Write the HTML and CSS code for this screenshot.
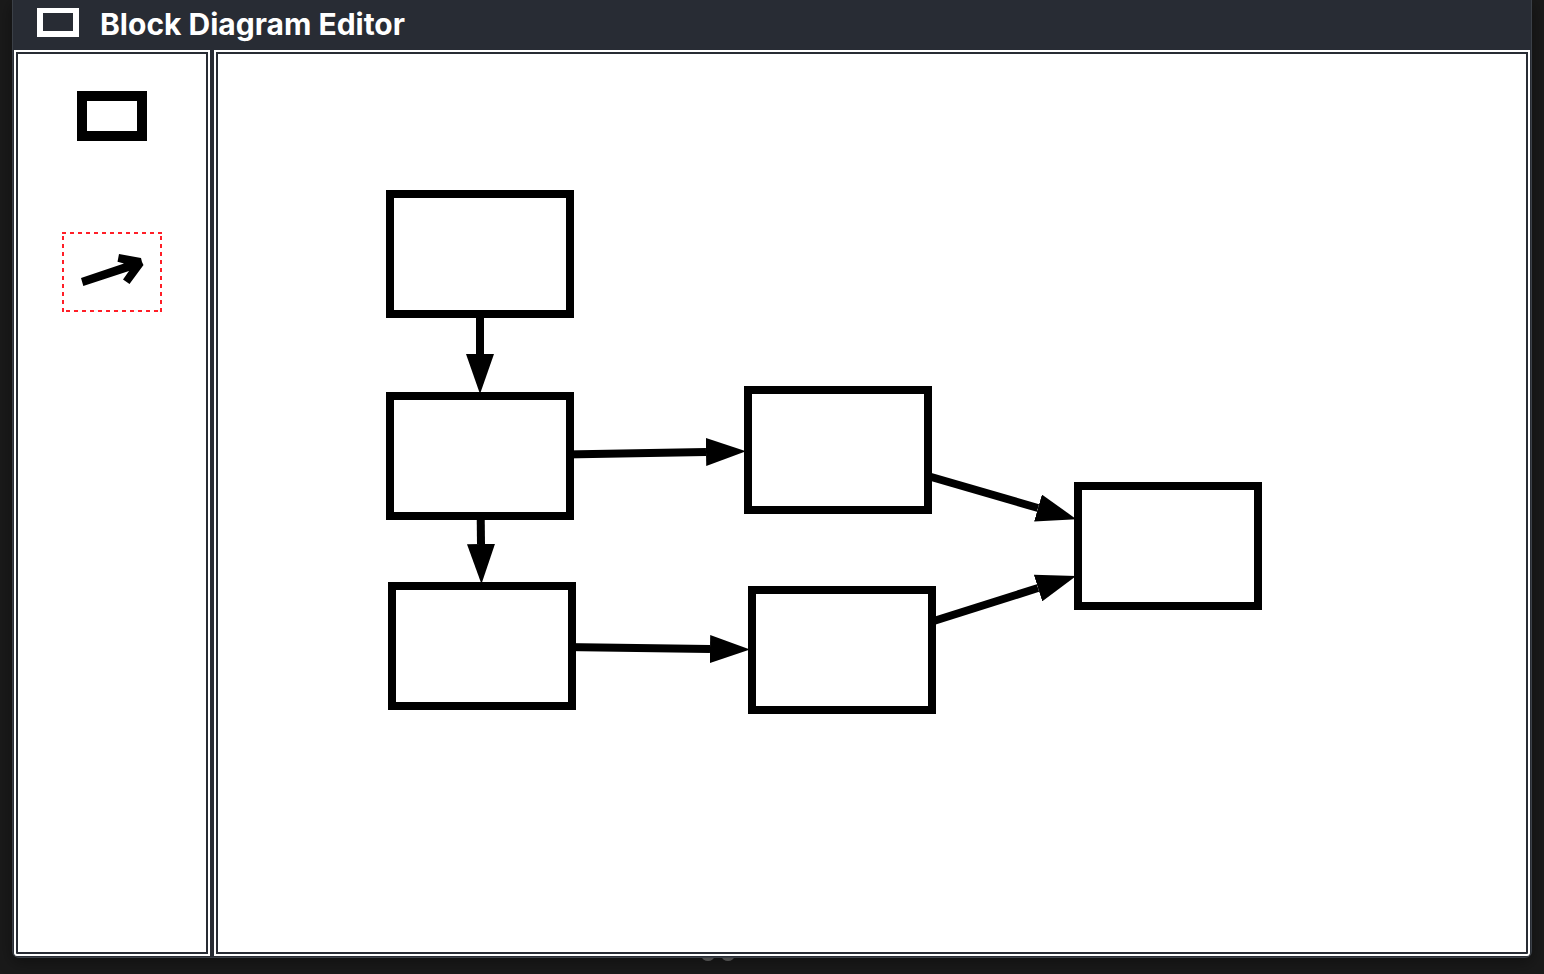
FILE: index.html
```html
<!DOCTYPE html>
<html lang="en">
<head>
<meta charset="utf-8">
<title>Block Diagram Editor</title>
<link rel="stylesheet" href="styles.css">
</head>
<body>
<div class="backdrop-dots" aria-hidden="true"><span class="dot"></span><span class="dot"></span></div>
<div class="window">
  <header class="titlebar">
    <span class="logo"></span>
    <h1 class="title">Block Diagram Editor</h1>
  </header>
  <main class="workspace">
    <nav class="panel toolbox" aria-label="Tools">
      <button class="tool" type="button" aria-label="Block">
        <svg width="100" height="80" viewBox="0 0 100 80"><rect x="20" y="20" width="60" height="40" fill="none" stroke="#000" stroke-width="10"/></svg>
      </button>
      <button class="tool" type="button" aria-label="Arrow" aria-pressed="true">
        <svg width="100" height="80" viewBox="0 0 100 80">
          <path class="selection" d="M0 1H100M99 4V80M4 79H100M1 4V80M0 79H2M98 1H100"/>
          <path d="M57 22 79 26 80 30 81.5 33 67.5 52 61 47.5 67 39 21.3 54 19 46 62 31.5 55.5 29.7Z"/>
        </svg>
      </button>
    </nav>
    <section class="panel canvas" aria-label="Diagram">
      <svg class="diagram" width="100%" height="100%">
        <defs>
          <marker id="head" markerUnits="userSpaceOnUse" markerWidth="40" markerHeight="28" refX="0" refY="14" orient="auto">
            <path d="M0 0 40 14 0 28Z"/>
          </marker>
        </defs>
        <g class="links">
          <line x1="260" y1="198" x2="260" y2="298"/>
          <line x1="260" y1="400" x2="261" y2="488"/>
          <line x1="260" y1="400" x2="486" y2="396"/>
          <line x1="262" y1="590" x2="490" y2="593"/>
          <line x1="618" y1="394" x2="818" y2="452"/>
          <line x1="622" y1="594" x2="818" y2="532"/>
        </g>
        <g class="blocks">
          <rect x="170" y="138" width="180" height="120"/>
          <rect x="170" y="340" width="180" height="120"/>
          <rect x="528" y="334" width="180" height="120"/>
          <rect x="858" y="430" width="180" height="120"/>
          <rect x="172" y="530" width="180" height="120"/>
          <rect x="532" y="534" width="180" height="120"/>
        </g>
      </svg>
    </section>
  </main>
</div>
</body>
</html>
```
FILE: styles.css
```css
* { box-sizing: border-box; }

body {
  margin: 0;
  height: 100vh;
  padding: 0 12px 16px;
  overflow: hidden;
  background: #1a1a1a;
  font-family: Inter, "Liberation Sans", sans-serif;
}

.window {
  position: relative;
  display: flex;
  flex-direction: column;
  height: 100%;
  padding: 0 1px 1px;
  border: 1px solid #3b4047;
  border-top: 0;
  border-radius: 0 0 7px 7px;
  background: #282c34;
  box-shadow: 0 4px 16px rgba(0, 0, 0, 0.4);
  overflow: hidden;
}

.titlebar {
  display: flex;
  align-items: flex-start;
  gap: 21px;
  height: 50px;
  padding: 8px 23px 0;
  color: #fff;
}

.logo {
  width: 42px;
  height: 29px;
  border: 6px solid #fff;
  border-top-width: 5px;
}

.title {
  margin: 0;
  font-size: 30px;
  line-height: 32px;
  font-weight: 700;
}

.workspace {
  flex: 1;
  display: grid;
  grid-template-columns: 196px 1fr;
  gap: 4px;
  min-height: 0;
}

.panel {
  border: 6px double #fff;
  background: #fff;
  background-clip: padding-box;
  min-width: 0;
}

.toolbox {
  display: flex;
  flex-direction: column;
  align-items: center;
  gap: 76px;
  padding-top: 20px;
  border-bottom-left-radius: 3px;
}

.tool {
  padding: 0;
  border: 0;
  background: none;
  cursor: pointer;
}

.tool svg { display: block; }

.selection {
  fill: none;
  stroke: #ff1f28;
  stroke-width: 2;
  stroke-dasharray: 4 4;
}

.canvas {
  overflow: hidden;
  border-bottom-right-radius: 3px;
}

.diagram { display: block; }

.links line {
  stroke: #000;
  stroke-width: 8;
  marker-end: url(#head);
}

.blocks rect {
  fill: #fff;
  stroke: #000;
  stroke-width: 8;
}

.backdrop-dots {
  position: absolute;
  left: 0;
  right: 0;
  bottom: 13px;
  display: flex;
  justify-content: center;
  gap: 8px;
  padding-right: 108px;
}

.dot {
  width: 12px;
  height: 8px;
  border-radius: 50%;
  background: #666;
}
```
